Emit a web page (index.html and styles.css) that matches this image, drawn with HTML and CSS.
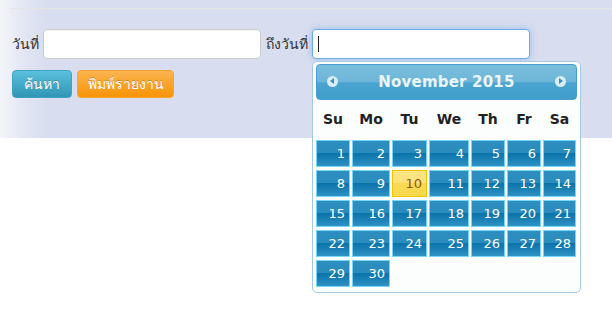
FILE: index.html
```html
<!DOCTYPE html>
<html lang="th">
<head>
    <meta charset="UTF-8">
    <meta name="viewport" content="width=device-width, initial-scale=1.0">
    <title>รายงาน</title>
    <link rel="stylesheet" href="styles.css">
</head>
<body>
    <div class="panel">
        <hr class="rule">

        <div class="filter-row">
            <label class="label label-from">วันที่</label>
            <input type="text" class="field">
            <label class="label label-to">ถึงวันที่</label>
            <span class="field-wrap"><input type="text" class="field field-active"></span>
        </div>

        <div class="actions">
            <button class="btn btn-search">ค้นหา</button>
            <button class="btn btn-print">พิมพ์รายงาน</button>
        </div>
    </div>

    <!-- datepicker popup, opened under the second field -->
    <div class="datepicker">
        <div class="dp-header">
            <span class="dp-nav dp-prev"></span>
            <span class="dp-title">November 2015</span>
            <span class="dp-nav dp-next"></span>
        </div>

        <div class="dp-grid">
            <span class="dow">Su</span>
            <span class="dow">Mo</span>
            <span class="dow">Tu</span>
            <span class="dow">We</span>
            <span class="dow">Th</span>
            <span class="dow">Fr</span>
            <span class="dow">Sa</span>

            <a class="day">1</a>
            <a class="day">2</a>
            <a class="day">3</a>
            <a class="day">4</a>
            <a class="day">5</a>
            <a class="day">6</a>
            <a class="day">7</a>
            <a class="day">8</a>
            <a class="day">9</a>
            <a class="day today">10</a>
            <a class="day">11</a>
            <a class="day">12</a>
            <a class="day">13</a>
            <a class="day">14</a>
            <a class="day">15</a>
            <a class="day">16</a>
            <a class="day">17</a>
            <a class="day">18</a>
            <a class="day">19</a>
            <a class="day">20</a>
            <a class="day">21</a>
            <a class="day">22</a>
            <a class="day">23</a>
            <a class="day">24</a>
            <a class="day">25</a>
            <a class="day">26</a>
            <a class="day">27</a>
            <a class="day">28</a>
            <a class="day">29</a>
            <a class="day">30</a>
        </div>
    </div>
</body>
</html>
```

FILE: styles.css
```css
* {
    margin: 0;
    padding: 0;
    box-sizing: border-box;
}

html, body {
    min-height: 100%;
}

body {
    font-family: Tahoma, "DejaVu Sans", "Noto Sans", sans-serif;
    background-color: #fff;
    color: #333;
    position: relative;
    min-height: 310px;
}

.panel {
    height: 138px;
    padding: 8px 0 0 10px;
    background: linear-gradient(to right, #f5f6fb 0, #e4e7f4 22px, #d8ddef 46px);
}

.rule {
    border: 0;
    border-top: 1px solid #e5e6e2;
}

.filter-row {
    display: flex;
    align-items: center;
    margin-top: 20px;
    padding-left: 2px;
    height: 30px;
}

.label {
    font-size: 14px;
    color: #333;
    white-space: nowrap;
}

.label-from {
    width: 31px;
}

.label-to {
    width: 46px;
    margin-left: 5px;
}

.field {
    width: 218px;
    height: 30px;
    border: 1px solid #cccccc;
    border-radius: 4px;
    background-color: #fff;
    box-shadow: inset 0 1px 1px rgba(0, 0, 0, 0.05);
}

.field-wrap {
    position: relative;
    display: inline-block;
    height: 30px;
}

.field-active {
    border-color: #6aaee6;
    box-shadow: 0 0 7px rgba(102, 160, 233, 0.55);
}

.field-wrap::after {
    content: "";
    position: absolute;
    left: 6px;
    top: 7px;
    width: 1px;
    height: 16px;
    background-color: #222;
}

.actions {
    display: flex;
    gap: 5px;
    margin-top: 11px;
    padding-left: 2px;
}

.btn {
    height: 28px;
    border-radius: 4px;
    border: 1px solid rgba(0, 0, 0, 0.08);
    color: #fff;
    font-family: inherit;
    font-size: 14px;
    text-shadow: 0 -1px 0 rgba(0, 0, 0, 0.2);
}

.btn-search {
    width: 60px;
    background: linear-gradient(to bottom, #5bc0de, #2f96b4);
    border-color: #3ea3c4;
}

.btn-print {
    width: 97px;
    background: linear-gradient(to bottom, #fbb450, #f89406);
    border-color: #f5a431;
}

/* datepicker */

.datepicker {
    position: absolute;
    left: 312px;
    top: 61px;
    width: 269px;
    padding: 2px 3px 5px;
    background-color: #fcfdfd;
    border: 1px solid #a6c9e2;
    border-radius: 5px;
    font-family: "DejaVu Sans", Verdana, sans-serif;
}

.dp-header {
    position: relative;
    height: 36px;
    display: flex;
    align-items: center;
    justify-content: center;
    border: 1px solid #4a9ad6;
    border-radius: 4px;
    background: linear-gradient(to bottom, #7ac0de 0, #6db5d8 50%, #4aa5d0 52%, #3f9dca 100%);
}

.dp-title {
    font-size: 15px;
    font-weight: bold;
    color: #eaf5f7;
    letter-spacing: 0.2px;
}

.dp-nav {
    position: absolute;
    top: 11px;
    width: 11px;
    height: 11px;
    border-radius: 50%;
    background-color: #d8ecf6;
}

.dp-nav::after {
    content: "";
    position: absolute;
    top: 2px;
    border-top: 3.5px solid transparent;
    border-bottom: 3.5px solid transparent;
}

.dp-prev {
    left: 10px;
}

.dp-prev::after {
    left: 3px;
    border-right: 4px solid #3d8ec0;
}

.dp-next {
    right: 10px;
}

.dp-next::after {
    left: 4px;
    border-left: 4px solid #3d8ec0;
}

.dp-grid {
    display: grid;
    grid-template-columns: 34px 38px 35px 40px 34px 34px 33px;
    grid-template-rows: 37px repeat(5, 27px);
    column-gap: 2px;
    row-gap: 3px;
}

.dow {
    font-size: 14px;
    font-weight: bold;
    color: #222;
    text-align: center;
    line-height: 39px;
}

.day {
    display: block;
    border: 1px solid #77d5f7;
    background: linear-gradient(to bottom, #2e8ec0 0, #2a8bbd 46%, #0b74ab 50%, #1a7fb4 72%, #2f93c4 100%);
    color: #fff;
    font-size: 13px;
    line-height: 25px;
    text-align: right;
    padding-right: 4px;
}

.day.today {
    border-color: #f5c400;
    background: linear-gradient(to bottom, #fbe584 0, #fbe27a 46%, #f8d955 50%, #f8d94b 100%);
    color: #915608;
}
```
